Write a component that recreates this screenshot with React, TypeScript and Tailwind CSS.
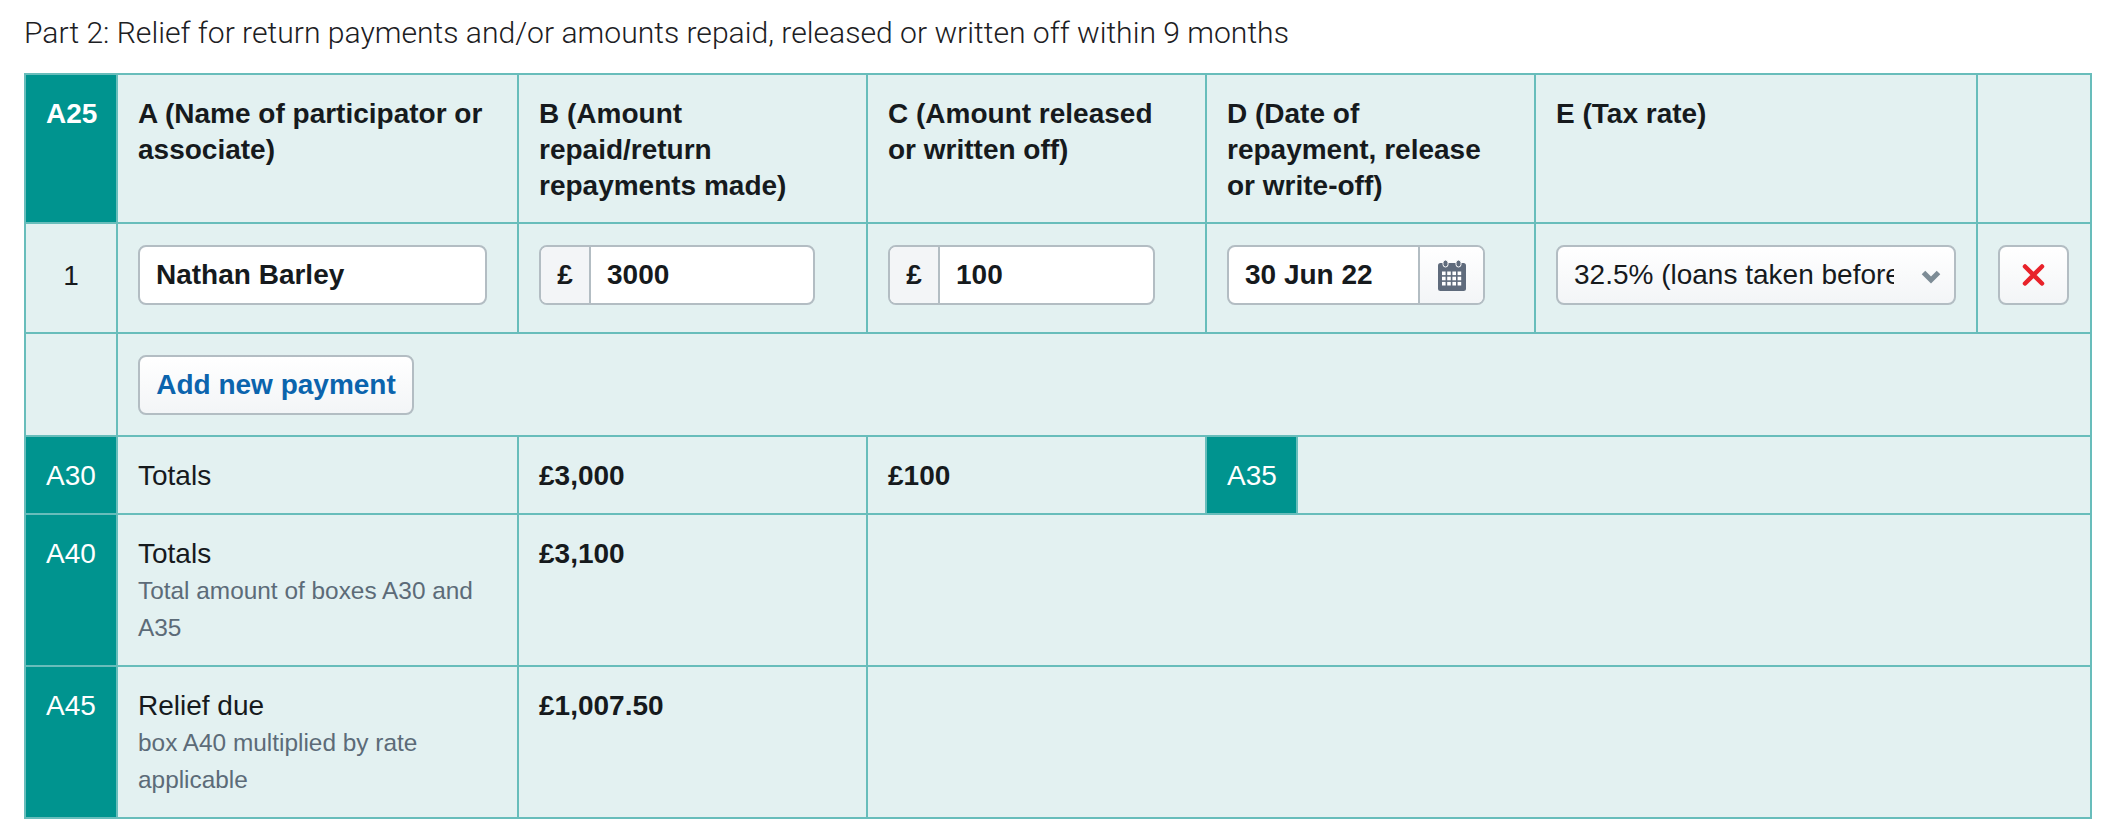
const cell = "border-2 border-[#68bdbb] px-5 pt-[21px] pb-[19px] align-top";
const code = "border-2 border-[#68bdbb] bg-[#00948f] px-5 pt-[21px] pb-[19px] align-top text-center text-white";
const head = "!pb-[18px]";
const field = "h-[60px] rounded-lg border-2 border-[#b3bdc3] flex items-center overflow-hidden whitespace-nowrap";
const grad = "bg-gradient-to-b from-white to-[#f3f5f7]";

function Money({ value, width }: { value: string; width: string }) {
  return (
    <div className={`${field} ${width} bg-white font-bold`}>
      <span className="flex h-full w-[50px] shrink-0 items-center justify-center border-r-2 border-[#b3bdc3] bg-[#f3f5f7]">£</span>
      <span className="pl-4">{value}</span>
    </div>
  );
}

function Calendar() {
  const squares = [];
  for (let r = 0; r < 3; r++) {
    for (let c = 0; c < 4; c++) {
      squares.push(<rect key={`${r}-${c}`} x={4 + c * 5.2} y={11.5 + r * 5.2} width="3.6" height="3.6" fill="#fff" />);
    }
  }
  return (
    <svg width="28" height="31" viewBox="0 0 28 31" aria-hidden="true">
      <rect x="0" y="3" width="28" height="28" rx="2.5" fill="#5f6b7c" />
      <rect x="5" y="0" width="5" height="7" rx="2.5" fill="#5f6b7c" stroke="#fff" strokeWidth="1" />
      <rect x="18" y="0" width="5" height="7" rx="2.5" fill="#5f6b7c" stroke="#fff" strokeWidth="1" />
      {squares}
    </svg>
  );
}

export default function App() {
  return (
    <div className="min-h-[838px] bg-white pl-6 text-[28px] leading-9 text-[#161a1d] antialiased font-['Liberation_Sans',Arial,sans-serif]">
      <h2 className="pt-[15px] pb-[22px] text-[30.1px] leading-9 font-light font-['Roboto',sans-serif] text-[#1c2023]">
        Part 2: Relief for return payments and/or amounts repaid, released or written off within 9 months
      </h2>
      <table className="w-[2068px] table-fixed border-collapse bg-[#e3f1f1]">
        <colgroup>
          <col className="w-[92px]" />
          <col className="w-[401px]" />
          <col className="w-[349px]" />
          <col className="w-[339px]" />
          <col className="w-[91px]" />
          <col className="w-[238px]" />
          <col className="w-[442px]" />
          <col className="w-[114px]" />
        </colgroup>
        <tbody>
          <tr className="h-[148px] font-bold">
            <th className={`${code} ${head}`}>A25</th>
            <th className={`${cell} text-left ${head}`}>A (Name of participator or associate)</th>
            <th className={`${cell} text-left ${head}`}>B (Amount repaid/return repayments made)</th>
            <th className={`${cell} text-left ${head}`}>C (Amount released or written off)</th>
            <th colSpan={2} className={`${cell} text-left ${head}`}>D (Date of repayment, release or write-off)</th>
            <th className={`${cell} text-left ${head}`}>E (Tax rate)</th>
            <th className={`${cell} ${head}`}></th>
          </tr>
          <tr className="h-[110px]">
            <td className={`${cell} text-center !align-middle !pb-[25px]`}>1</td>
            <td className={cell}>
              <div className={`${field} w-[349px] bg-white pl-[16px] font-bold`}>Nathan Barley</div>
            </td>
            <td className={cell}><Money value="3000" width="w-[276px]" /></td>
            <td className={cell}><Money value="100" width="w-[267px]" /></td>
            <td colSpan={2} className={cell}>
              <div className={`${field} w-[258px] bg-white font-bold`}>
                <span className="w-[189px] shrink-0 pl-4">30 Jun 22</span>
                <span className={`flex h-full flex-1 items-center justify-center border-l-2 border-[#b3bdc3] ${grad}`}><Calendar /></span>
              </div>
            </td>
            <td className={cell}>
              <div className={`${field} w-[400px] ${grad} relative pl-4`}>
                <span className="block w-[320px] overflow-hidden">32.5% (loans taken before 6 April 2022)</span>
                <svg className="absolute right-[13px] top-[23px]" width="20" height="14" viewBox="0 0 20 14" aria-hidden="true">
                  <path d="M2.5 2.5 L10 10 L17.5 2.5" fill="none" stroke="#7d8c96" strokeWidth="5" />
                </svg>
              </div>
            </td>
            <td className={cell}>
              <div className={`${field} w-[71px] justify-center ${grad}`}>
                <svg width="23" height="22" viewBox="0 0 23 22" aria-hidden="true">
                  <path d="M3 2.5 L20 19.5 M20 2.5 L3 19.5" fill="none" stroke="#e8222a" strokeWidth="4.5" strokeLinecap="round" />
                </svg>
              </div>
            </td>
          </tr>
          <tr className="h-[103px]">
            <td className={cell}></td>
            <td colSpan={7} className={cell}>
              <button className={`${field} w-[276px] justify-center ${grad} font-bold text-[#0b64ad]`}>Add new payment</button>
            </td>
          </tr>
          <tr className="h-[78px]">
            <td className={`${code} !align-middle`}>A30</td>
            <td className={`${cell} !align-middle`}>Totals</td>
            <td className={`${cell} !align-middle font-bold`}>£3,000</td>
            <td className={`${cell} !align-middle font-bold`}>£100</td>
            <td className={`${code} !align-middle`}>A35</td>
            <td colSpan={3} className={cell}></td>
          </tr>
          <tr className="h-[152px]">
            <td className={code}>A40</td>
            <td className={cell}>
              Totals
              <p className="text-[24.4px] leading-[37px] text-[#5c6b78]">Total amount of boxes A30 and A35</p>
            </td>
            <td className={`${cell} font-bold`}>£3,100</td>
            <td colSpan={5} className={cell}></td>
          </tr>
          <tr className="h-[152px]">
            <td className={code}>A45</td>
            <td className={cell}>
              Relief due
              <p className="text-[24.4px] leading-[37px] text-[#5c6b78]">box A40 multiplied by rate applicable</p>
            </td>
            <td className={`${cell} font-bold`}>£1,007.50</td>
            <td colSpan={5} className={cell}></td>
          </tr>
        </tbody>
      </table>
    </div>
  );
}
